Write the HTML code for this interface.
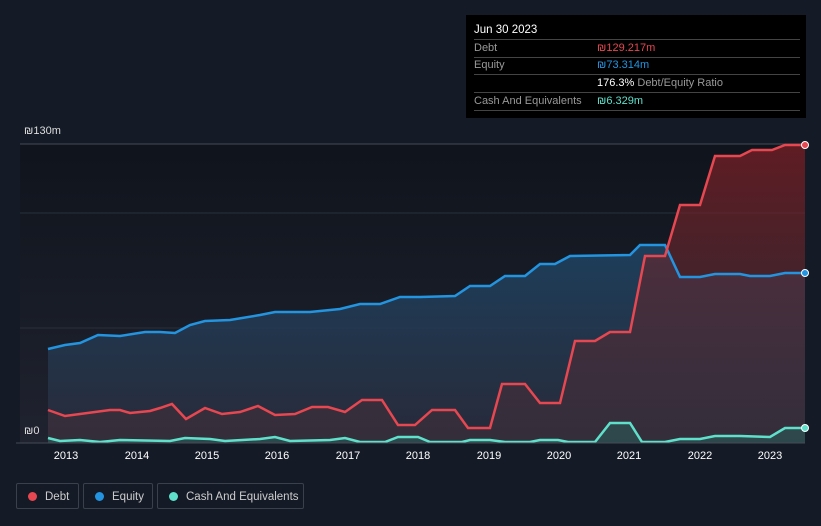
<!DOCTYPE html>
<html><head><style>
body{margin:0;width:821px;height:526px;background:#151b26;font-family:"Liberation Sans",sans-serif;overflow:hidden;position:relative}
.tt{position:absolute;left:466px;top:15px;width:340px;height:103px;background:#000;color:#fff;font-size:11px}
.tt .r{position:absolute;left:8px;right:6px;border-bottom:1px solid #444;height:17px;line-height:17px}
.lbl{color:#999}
.v{position:absolute;left:123px;top:0}
.leg{position:absolute;top:483px;height:26px;border:1px solid #3a404c;border-radius:2px;color:#ccc;font-size:11.5px;line-height:26px;box-sizing:border-box}
.leg i{position:absolute;left:11px;top:8px;width:9px;height:9px;border-radius:50%}
.yr{position:absolute;top:450px;color:#fff;font-size:11px;width:40px;text-align:center}
</style></head><body>
<svg width="821" height="526" style="position:absolute;left:0;top:0">
<defs>
<linearGradient id="eg" x1="0" y1="0" x2="0" y2="1"><stop offset="0" stop-color="#1f4565" stop-opacity=".85"/><stop offset="1" stop-color="#2a2c3c" stop-opacity=".8"/></linearGradient>
<linearGradient id="dg" x1="0" y1="0" x2="0" y2="1"><stop offset="0" stop-color="#7a1f25" stop-opacity=".75"/><stop offset="1" stop-color="#40303a" stop-opacity=".5"/></linearGradient>
<linearGradient id="bg" x1="0" y1="0" x2="0" y2="1"><stop offset="0" stop-color="#0d1118"/><stop offset="1" stop-color="#242633"/></linearGradient>
</defs>
<rect x="20" y="144" width="785" height="299" fill="url(#bg)" opacity=".7"/>
<line x1="20" y1="144" x2="805" y2="144" stroke="#444a55"/>
<line x1="20" y1="213" x2="805" y2="213" stroke="#2a303a"/>
<line x1="20" y1="328" x2="805" y2="328" stroke="#2a303a"/>
<path fill="url(#eg)" d="M48,349 L65,345 80,343 98,335 120,336 145,332 160,332 175,333 190,325 205,321 230,320 260,315 275,312 310,312 340,309 360,304 380,304 400,297 420,297 455,296 470,286 490,286 505,276 525,276 540,264 555,264 570,256 630,255 640,245 665,245 680,277 700,277 715,274 740,274 750,276 770,276 785,273 805,273 L805,443 48,443Z"/>
<path fill="url(#dg)" d="M48,410 L65,416 80,414 110,410 120,410 130,413 150,411 160,408 172,404 186,419 205,408 222,414 240,412 258,406 275,415 295,414 312,407 328,407 345,412 362,400 382,400 398,425 415,425 432,410 455,410 468,428 490,428 502,384 525,384 540,403 560,403 575,341 595,341 610,332 630,332 645,256 665,256 680,205 700,205 715,156 740,156 752,150 772,150 785,145 805,145 L805,443 48,443Z"/>
<path fill="#2a5a58" opacity=".6" d="M48,438 L60,441 80,440 100,442 120,440 170,441 185,438 210,439 225,441 260,439 275,437 290,441 330,440 345,438 360,442 385,442 398,437 418,437 430,442 462,442 470,440 490,440 505,442 530,442 540,440 558,440 568,442 595,442 610,423 630,423 642,442 665,442 680,439 700,439 715,436 740,436 770,437 785,428 805,428 L805,443 48,443Z"/>
<path fill="none" stroke="#2394df" stroke-width="2.5" d="M48,349 L65,345 80,343 98,335 120,336 145,332 160,332 175,333 190,325 205,321 230,320 260,315 275,312 310,312 340,309 360,304 380,304 400,297 420,297 455,296 470,286 490,286 505,276 525,276 540,264 555,264 570,256 630,255 640,245 665,245 680,277 700,277 715,274 740,274 750,276 770,276 785,273 805,273"/>
<path fill="none" stroke="#e64750" stroke-width="2.5" d="M48,410 L65,416 80,414 110,410 120,410 130,413 150,411 160,408 172,404 186,419 205,408 222,414 240,412 258,406 275,415 295,414 312,407 328,407 345,412 362,400 382,400 398,425 415,425 432,410 455,410 468,428 490,428 502,384 525,384 540,403 560,403 575,341 595,341 610,332 630,332 645,256 665,256 680,205 700,205 715,156 740,156 752,150 772,150 785,145 805,145"/>
<path fill="none" stroke="#5fe0cb" stroke-width="2.5" d="M48,438 L60,441 80,440 100,442 120,440 170,441 185,438 210,439 225,441 260,439 275,437 290,441 330,440 345,438 360,442 385,442 398,437 418,437 430,442 462,442 470,440 490,440 505,442 530,442 540,440 558,440 568,442 595,442 610,423 630,423 642,442 665,442 680,439 700,439 715,436 740,436 770,437 785,428 805,428"/>
<line x1="16" y1="443" x2="805" y2="443" stroke="#444a55"/>
<circle cx="805" cy="145" r="3.5" fill="#e64750" stroke="#fff" stroke-width="1"/>
<circle cx="805" cy="273" r="3.5" fill="#2394df" stroke="#fff" stroke-width="1"/>
<circle cx="805" cy="428" r="3.5" fill="#5fe0cb" stroke="#fff" stroke-width="1"/>
</svg>
<div style="position:absolute;left:24px;top:125px;color:#ddd;font-size:11px">₪130m</div>
<div style="position:absolute;left:24px;top:425px;color:#ddd;font-size:11px">₪0</div>
<div class="yr" style="left:46px">2013</div><div class="yr" style="left:117px">2014</div><div class="yr" style="left:187px">2015</div><div class="yr" style="left:257px">2016</div><div class="yr" style="left:328px">2017</div><div class="yr" style="left:398px">2018</div><div class="yr" style="left:469px">2019</div><div class="yr" style="left:539px">2020</div><div class="yr" style="left:609px">2021</div><div class="yr" style="left:680px">2022</div><div class="yr" style="left:750px">2023</div>
<div class="tt">
<div style="position:absolute;left:8px;top:9px;font-size:11.5px">Jun 30 2023</div>
<div class="r" style="top:24px;border-top:1px solid #444"><span class="lbl">Debt</span><span class="v" style="color:#e64750">₪129.217m</span></div>
<div class="r" style="top:42px"><span class="lbl">Equity</span><span class="v" style="color:#2394df">₪73.314m</span></div>
<div class="r" style="top:60px;border:0"><span class="v"><b style="font-weight:normal;color:#fff">176.3%</b> <span class="lbl">Debt/Equity Ratio</span></span></div>
<div class="r" style="top:77px;border-top:1px solid #444"><span class="lbl">Cash And Equivalents</span><span class="v" style="color:#5fe0cb">₪6.329m</span></div>
</div>
<div class="leg" style="left:16px;width:63px"><i style="background:#e64750"></i><span style="margin-left:28px">Debt</span></div>
<div class="leg" style="left:83px;width:70px"><i style="background:#2394df"></i><span style="margin-left:28px">Equity</span></div>
<div class="leg" style="left:157px;width:147px"><i style="background:#5fe0cb"></i><span style="margin-left:28px">Cash And Equivalents</span></div>
</body></html>
